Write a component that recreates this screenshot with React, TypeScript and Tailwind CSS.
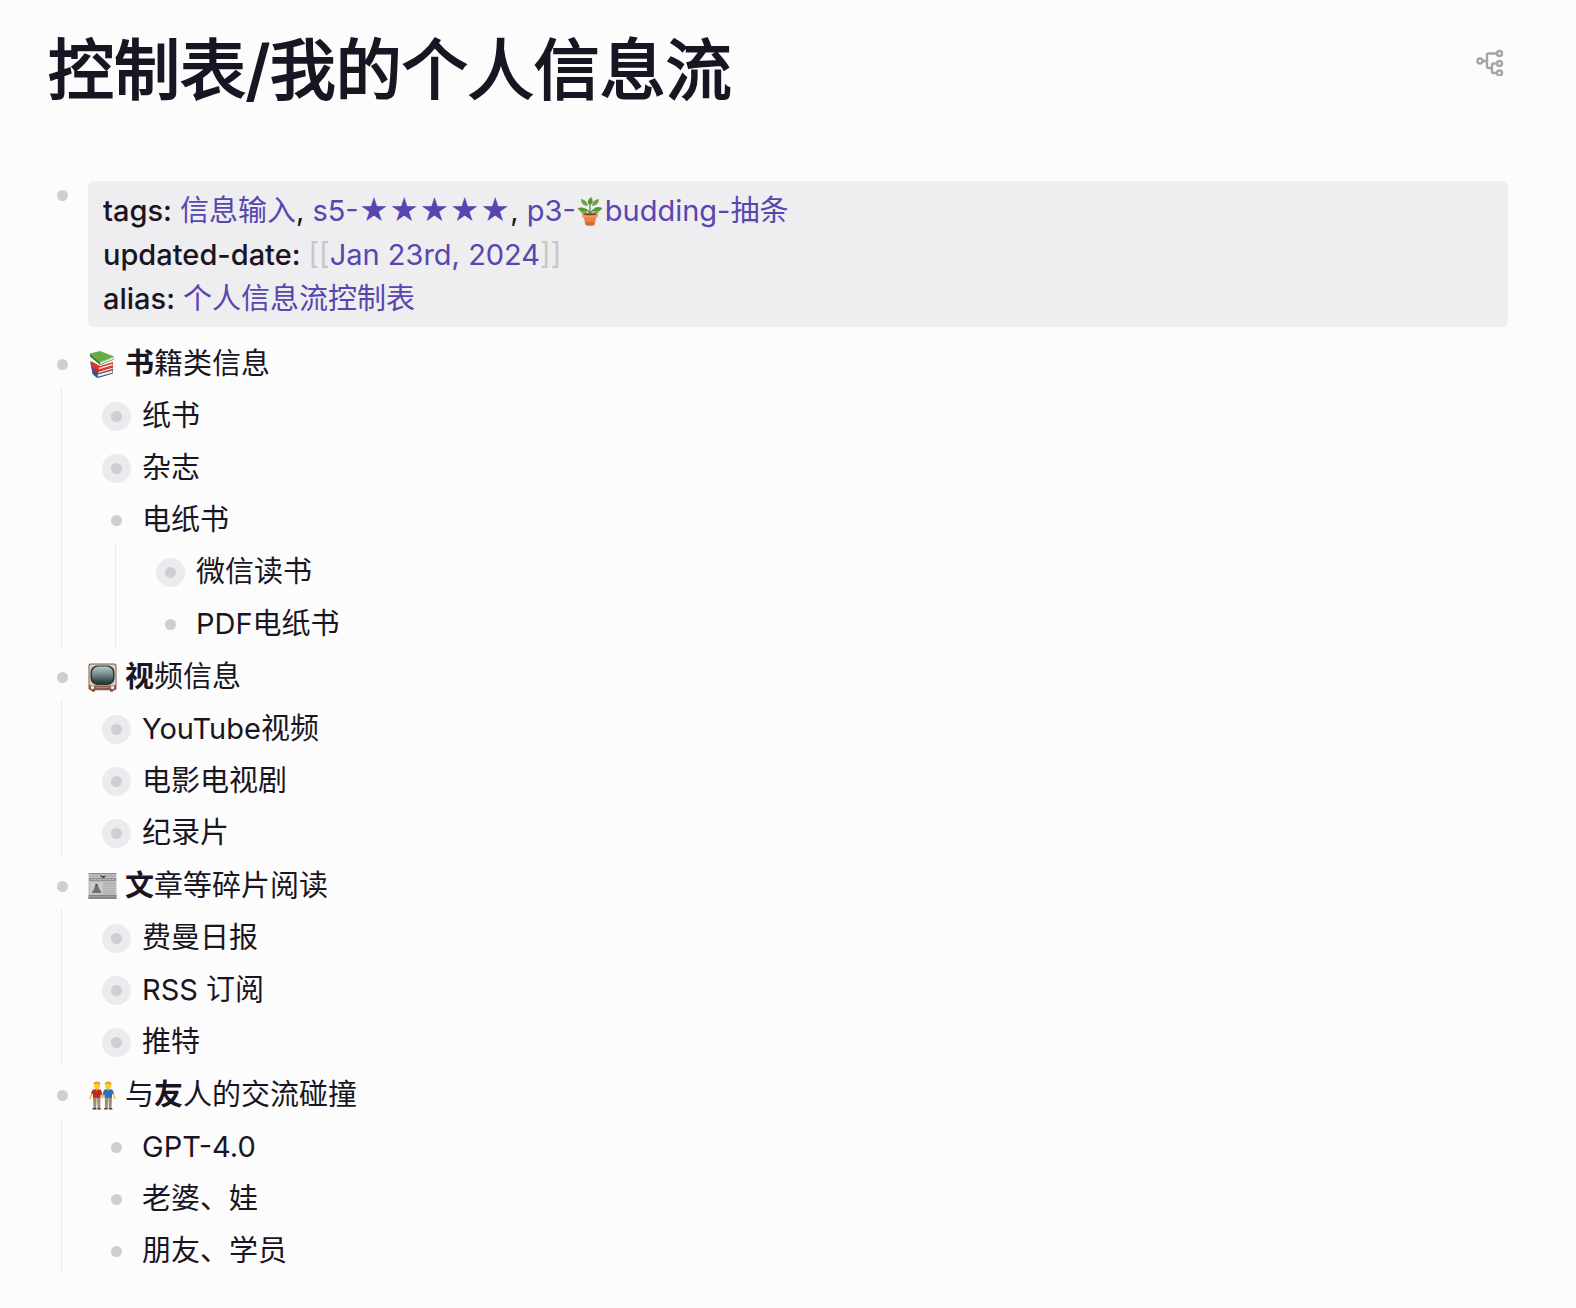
import React from "react";

type Item = { text: React.ReactNode; folded?: boolean; children?: Item[] };
type Group = { icon: React.ReactNode; label: string; title: React.ReactNode; items: Item[] };

function Books() {
  return (
    <svg viewBox="0 0 29 29" className="size-[29px] shrink-0" role="img" aria-label="📚">
      <path d="M2 11l2.500 13L9 28l1-8z" fill="#35539b" />
      <path d="M6 21l4 2.500 15-4v4l-15 4.500-3-3z" fill="#2d4f96" />
      <path d="M9.500 24.500l15-4.300v2.500L10 26.800z" fill="#e6ebf2" />
      <path d="M3 11l9 5 13-4v4.500L11 21l-7-4z" fill="#d93a2a" />
      <path d="M5 17l6 3.500 14-4v3.500L10.500 24 6 20.500z" fill="#c22d22" />
      <path d="M11 17.800l13.500-4v1.500L11 19.300zM10.500 21.800l14-4v1.200l-14 4z" fill="#f6e6e2" />
      <path d="M2 3.500v3L12 15l14-5.500V7l-14 5z" fill="#3f8130" />
      <path d="M12 12.500L26 7.300v1.800L12 14.200z" fill="#eef2e8" />
      <path d="M2 3.500L12 1l14 5.500L12 12z" fill="#65ad43" />
    </svg>
  );
}

function Television() {
  return (
    <svg viewBox="0 0 29 29" className="size-[29px] shrink-0" role="img" aria-label="📺">
      <defs>
        <linearGradient id="screen" x1="0" y1="0" x2="0" y2="1">
          <stop offset="0" stopColor="#b4cccc" />
          <stop offset=".5" stopColor="#6e8585" />
          <stop offset="1" stopColor="#283235" />
        </linearGradient>
      </defs>
      <path d="M3 26h4v2.500H4zM22 26h4l-1 2.500h-3z" fill="#5c3a2f" />
      <rect x=".5" y=".5" width="28" height="26.800" rx="2" fill="#8b5a48" />
      <rect x="1.500" y="1.500" width="26" height="21" rx="1.500" fill="#dcd2c0" />
      <rect x="2.500" y="2.500" width="24" height="19.500" rx="7" fill="#2c3435" />
      <rect x="4" y="3.500" width="21" height="17" rx="6.500" fill="url(#screen)" />
      <path d="M8 24.500h13" stroke="#b98672" strokeWidth="1" />
      <circle cx="4.500" cy="24.500" r="1.700" fill="#efe9dc" />
      <circle cx="24.500" cy="24.500" r="1.700" fill="#efe9dc" />
    </svg>
  );
}

function Newspaper() {
  return (
    <svg viewBox="0 0 29 29" className="size-[29px] shrink-0" role="img" aria-label="📰">
      <rect x=".5" y="1" width="28" height="26" fill="#bdbdbd" />
      <rect x=".5" y="1" width="28" height="1" fill="#8c8c8c" />
      <path d="M2 4h9M18 4h9" stroke="#a8a8a8" />
      <path d="M12.500 3.500l2 1.500 2-.5-1 1.500" fill="none" stroke="#3c3c3c" strokeWidth="1.300" />
      <rect x="1" y="6" width="27" height="3" fill="#929292" />
      <path d="M3 7.500h23" stroke="#bcbcbc" strokeDasharray="2 1" />
      <rect x="2" y="10.500" width="12.500" height="11.500" fill="#cbcbcb" />
      <path d="M3.500 21l2.500-4 1.500-4h2l2 4 2 4z" fill="#707070" />
      <circle cx="8.500" cy="13" r="1.300" fill="#555" />
      <path d="M16 11.500h11M16 14h5M22 14h5M16 16.500h5M22 16.500h5M16 19h5M22 19h5M16 21.500h5M22 21.500h5" stroke="#b0b0b0" strokeWidth="1" />
      <rect x=".5" y="23" width="28" height="4" fill="#868686" />
      <path d="M1 24.500h27" stroke="#9d9d9d" />
    </svg>
  );
}

function Friends() {
  return (
    <svg viewBox="0 0 29 29" className="size-[29px] shrink-0" role="img" aria-label="👬">
      <path d="M5 16h3.700l-.5 11H5.500zM9 16h3.500l-.3 11H9.500zM16.800 16h3.400l-.5 11H17zM20.500 16H24l-.5 11h-2.700z" fill="#a28b73" />
      <path d="M5 27h3.500v1.500H4zM9.300 27h3l1 1.500h-4zM16.500 27h3.200v1.500h-4zM20.800 27h3l1 1.500h-4z" fill="#4c3a32" />
      <path d="M4.500 11l-2.500 6.500M13 11l1.500 6 1.500-6M24.500 11l2.500 6.500" fill="none" stroke="#f7bd2c" strokeWidth="1.600" strokeLinecap="round" />
      <path d="M4 10q.5-1.700 2-1.800h5.500q1.500.1 2 2l.6 3.300-1.600.4v2.800H5V13l-2-.4z" fill="#bd2a27" />
      <path d="M15.500 10.200q.5-1.900 2-2H23q1.500.1 2 1.800l1 2.600-2 .4v3.700h-7.500v-2.800l-1.600-.4z" fill="#2871b6" />
      <path d="M7.500 6.500h3v2.300q-1.500 1.300-3 0zM18.700 6.500h3v2.300q-1.500 1.300-3 0z" fill="#edaa20" />
      <rect x="6" y="1" width="6" height="6.600" rx="2.600" fill="#ffcc36" />
      <rect x="17.200" y="1" width="6" height="6.600" rx="2.600" fill="#ffcc36" />
      <path d="M5.500 3.500q0-3 3.500-3t3.500 3q-3.500-1.500-7 0zM16.700 3.500q0-3 3.500-3t3.500 3q-3.500-1.500-7 0z" fill="#e5a51d" />
    </svg>
  );
}

function Plant() {
  return (
    <svg viewBox="0 0 29 29" className="inline-block size-[29px] align-[-5px]" role="img" aria-label="🪴">
      <path d="M14 18V7M14 17q-1-4-6-5M14 17q2-4 6-5" fill="none" stroke="#64933d" strokeWidth="1.300" />
      <path d="M14 8q-5-3 1-8 4 5-1 8z" fill="#579438" />
      <path d="M12 9Q5 9 5 2q6 1 7 7zM16 9q0-6 7-7 0 6-7 7z" fill="#69a641" />
      <path d="M12 14q-7 3-10.500-3 7-2 10.500 3zM17 14q2-6 9.500-3-3 5-9.500 3z" fill="#569637" />
      <path d="M12.500 17q-5 2-8-2 5-3 8 2zM15.500 17q4-5 8-2-4 4-8 2z" fill="#76ae4a" />
      <path d="M7.500 19h13l-2 9.300q-4.500 1.200-9 0z" fill="#e88343" />
      <path d="M9.500 25h9l-.6 2.800q-4 1-7.800 0z" fill="#cf6b34" />
      <rect x="6" y="16.500" width="16" height="4" rx="1" fill="#f2995a" />
      <ellipse cx="14" cy="17.200" rx="6.500" ry="1" fill="#754329" />
    </svg>
  );
}

function Bullet({ folded }: { folded?: boolean }) {
  return (
    <span className={folded ? "flex size-[29px] shrink-0 items-center justify-center rounded-full bg-[#eceaed]" : "flex size-[29px] shrink-0 items-center justify-center"}>
      <span className="size-[11px] rounded-full bg-[#d0ced4]" />
    </span>
  );
}

function Outline({ items }: { items: Item[] }) {
  return (
    <ul className="ml-[13px] border-l border-[#e9e8ea] pl-[40px]">
      {items.map((item, i) => (
        <li key={i}>
          <div className="flex h-[52px] items-center gap-[11px] pt-[6px]">
            <Bullet folded={item.folded} />
            <span>{item.text}</span>
          </div>
          {item.children && <Outline items={item.children} />}
        </li>
      ))}
    </ul>
  );
}

const groups: Group[] = [
  {
    icon: <Books />,
    label: "books",
    title: <><b>书</b>籍类信息</>,
    items: [
      { text: "纸书", folded: true },
      { text: "杂志", folded: true },
      { text: "电纸书", children: [{ text: "微信读书", folded: true }, { text: "PDF电纸书" }] },
    ],
  },
  {
    icon: <Television />,
    label: "video",
    title: <><b>视</b>频信息</>,
    items: [
      { text: "YouTube视频", folded: true },
      { text: "电影电视剧", folded: true },
      { text: "纪录片", folded: true },
    ],
  },
  {
    icon: <Newspaper />,
    label: "articles",
    title: <><b>文</b>章等碎片阅读</>,
    items: [
      { text: "费曼日报", folded: true },
      { text: "RSS 订阅", folded: true },
      { text: "推特", folded: true },
    ],
  },
  {
    icon: <Friends />,
    label: "friends",
    title: <>与<b>友</b>人的交流碰撞</>,
    items: [{ text: "GPT-4.0" }, { text: "老婆、娃" }, { text: "朋友、学员" }],
  },
];

function PageLink({ children }: { children: React.ReactNode }) {
  return <a href="#" className="text-[#5746af]">{children}</a>;
}

export default function App() {
  return (
    <main lang="zh-CN" className="min-h-screen bg-[#fcfcfc] pr-[68px] pb-9 pl-12 pt-[28px] font-['Inter','Noto_Sans_CJK_SC',sans-serif] text-[29px] leading-[44px] text-[#1a1523]">
      <header className="flex items-start justify-between">
        <h1 className="pt-[2px] text-[66px] leading-[80px] font-normal [-webkit-text-stroke:2px_#1a1523]">控制表/我的个人信息流</h1>
        <button type="button" aria-label="Mind map" className="mt-[18px] mr-[4px] text-[#a6a4aa]">
          <svg viewBox="0 0 28 30" width="28" height="30" fill="none" stroke="currentColor" strokeWidth="2.400">
            <circle cx="4" cy="15" r="2.500" />
            <circle cx="23.500" cy="7.500" r="2.500" />
            <circle cx="23.500" cy="17.500" r="2.500" />
            <circle cx="23.500" cy="27" r="2.500" />
            <path d="M6.500 15H11M21 7.500H12.500Q11 7.500 11 9V20.500Q11 22 12.500 22H16M21 17.500H17.500Q16 17.500 16 19V25.500Q16 27 17.500 27H21" />
          </svg>
        </button>
      </header>

      <section className="mt-[71px] flex gap-[11px]">
        <Bullet />
        <dl className="flex-1 rounded-[6px] bg-[#eeedef] px-[15px] pt-[8px] pb-[6px]">
          <div className="flex gap-2">
            <dt className="font-medium">tags:</dt>
            <dd>
              <PageLink>信息输入</PageLink>, <PageLink>s5-★★★★★</PageLink>, <PageLink>p3-<Plant />budding-抽条</PageLink>
            </dd>
          </div>
          <div className="flex gap-2">
            <dt className="font-medium">updated-date:</dt>
            <dd>
              <span className="text-[#c8c7cb]">[[</span><PageLink>Jan 23rd, 2024</PageLink><span className="text-[#c8c7cb]">]]</span>
            </dd>
          </div>
          <div className="flex gap-2">
            <dt className="font-medium">alias:</dt>
            <dd><PageLink>个人信息流控制表</PageLink></dd>
          </div>
        </dl>
      </section>

      <div className="mt-[7px]">
        {groups.map((group) => (
          <section key={group.label}>
            <h2 className="flex h-[53px] items-center pt-[7px]">
              <Bullet />
              <span className="ml-[11px] flex items-center gap-[8px]">
                {group.icon}
                <span>{group.title}</span>
              </span>
            </h2>
            <Outline items={group.items} />
          </section>
        ))}
      </div>
    </main>
  );
}
